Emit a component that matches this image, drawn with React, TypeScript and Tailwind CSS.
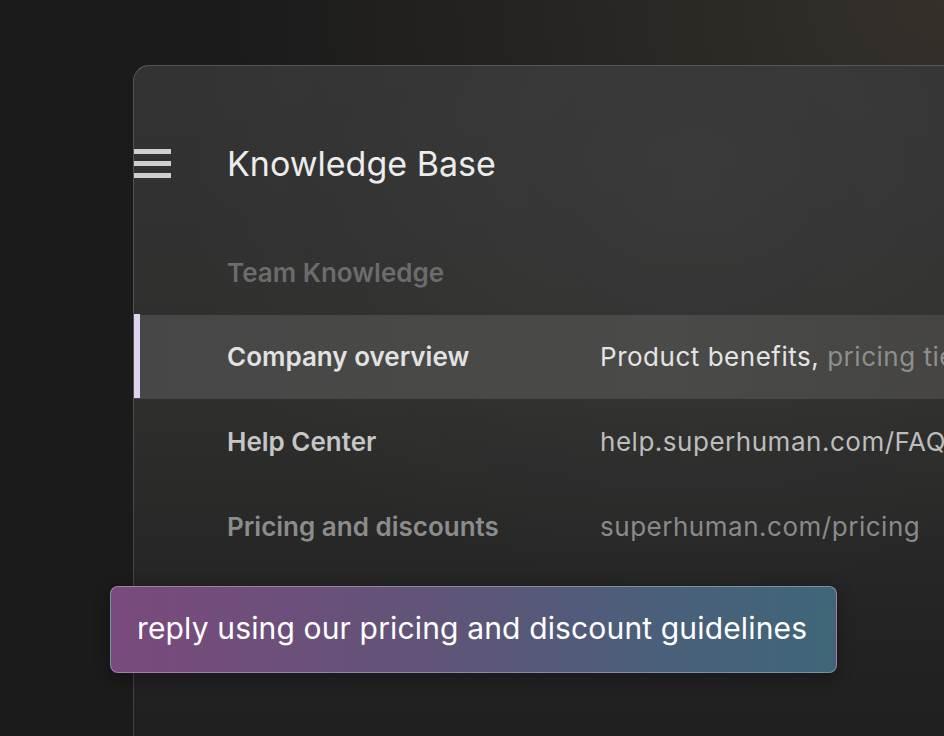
import React from "react"

const rows = [
  {
    label: "Company overview",
    labelClass: "text-[#e2e2e2]",
    active: true,
    detail: (
      <>
        <span className="text-[#e4e4e4]">Product benefits,</span>
        <span className="text-[#8e8e8c]"> pricing tiers and plans</span>
      </>
    ),
  },
  {
    label: "Help Center",
    labelClass: "text-[#c6c6c6]",
    active: false,
    detail: <span className="text-[#bdbdbd]">help.superhuman.com/FAQ</span>,
  },
  {
    label: "Pricing and discounts",
    labelClass: "text-[#8c8c8c]",
    active: false,
    detail: <span className="text-[#8a8a8a]">superhuman.com/pricing</span>,
  },
]

function Hamburger() {
  return (
    <div className="flex w-[37px] flex-col gap-[7px]">
      <span className="block h-[5px] w-full bg-[#cfcfcf]" />
      <span className="block h-[5px] w-full bg-[#cfcfcf]" />
      <span className="block h-[5px] w-full bg-[#cfcfcf]" />
    </div>
  )
}

export default function App() {
  return (
    <div
      className="relative h-[736px] w-[944px] overflow-hidden bg-[radial-gradient(ellipse_900px_700px_at_100%_0%,#35302a_0%,#262422_45%,#1b1b1b_80%)] pl-[133px] pt-[65px]"
      style={{ fontFamily: "Inter, 'Noto Sans', sans-serif" }}
    >
      {/* knowledge base panel, runs off the right and bottom edge */}
      <div className="h-[760px] w-[900px] overflow-hidden rounded-tl-[16px] border border-white/15 border-t-white/25 bg-[radial-gradient(ellipse_520px_420px_at_560px_120px,rgba(255,255,255,0.045),transparent),linear-gradient(180deg,#333333_0%,#2e2e2d_45%,#232323_75%,#1d1d1d_100%)]">
        <div className="mt-[55px] flex h-[84px] items-center">
          <Hamburger />
          <h1 className="ml-[56px] text-[34px] font-normal text-[#ececec]">
            Knowledge Base
          </h1>
        </div>

        <div className="mt-[25px] flex h-[84px] items-center pl-[93px]">
          <span className="text-[26px] font-semibold text-[#6c6c6c]">
            Team Knowledge
          </span>
        </div>

        {rows.map((row) => (
          <div
            key={row.label}
            className={
              row.active
                ? "mt-px flex h-[84px] items-center pb-[2px] bg-[linear-gradient(90deg,#474747_0%,#4a4a48_60%,#444340_100%)]"
                : "flex h-[85px] items-center"
            }
          >
            <span
              className={
                row.active
                  ? "h-[84px] w-[6px] shrink-0 bg-[#e0d3f2]"
                  : "h-full w-[6px] shrink-0"
              }
            />
            <span
              className={`ml-[87px] w-[373px] shrink-0 text-[26px] font-semibold ${row.labelClass}`}
            >
              {row.label}
            </span>
            <span className="whitespace-nowrap text-[26px] font-normal tracking-[0.02em]">
              {row.detail}
            </span>
          </div>
        ))}
      </div>

      {/* prompt chip over the panel */}
      <div className="absolute left-[110px] top-[586px] flex h-[87px] w-[727px] items-center rounded-[8px] border border-white/30 bg-[linear-gradient(90deg,#7a4a7d_0%,#605478_45%,#4a5f7a_75%,#3f6678_100%)] pb-[2px] pl-[26px] shadow-[0_4px_16px_rgba(0,0,0,0.35)]">
        <span className="text-[30px] font-normal tracking-[0.005em] text-white">
          reply using our pricing and discount guidelines
        </span>
      </div>
    </div>
  )
}
